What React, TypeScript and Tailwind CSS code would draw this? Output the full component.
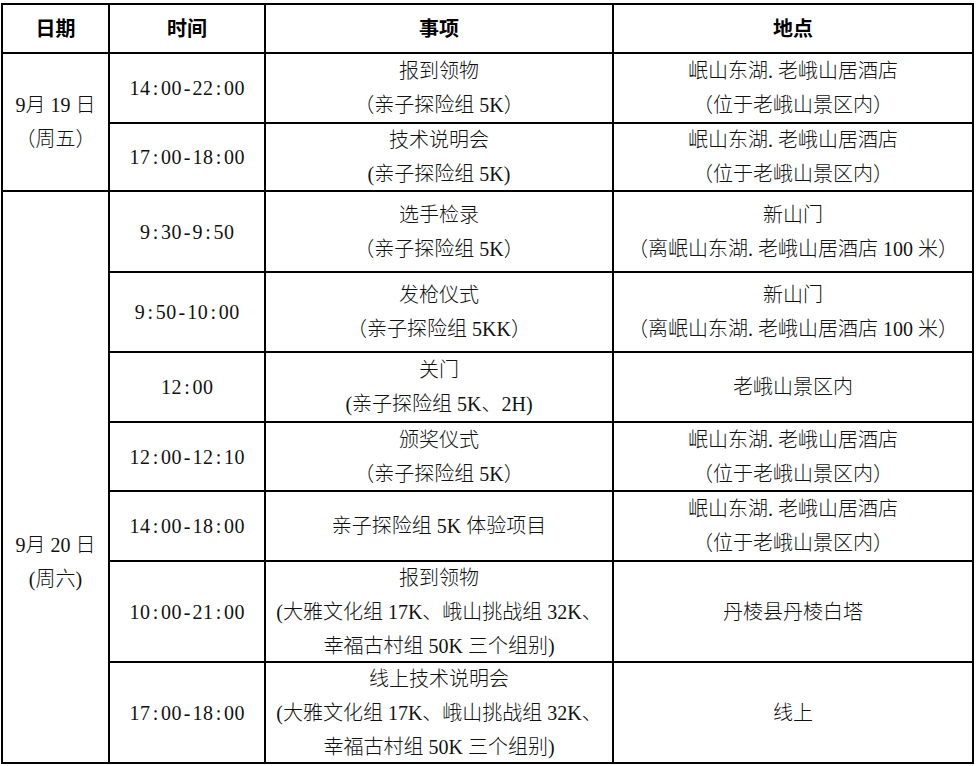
import React from "react";

type Row = { time: string; item: string[]; loc: string[] };

const LOC_A = ["岷山东湖. 老峨山居酒店", "（位于老峨山景区内）"];
const LOC_B = ["新山门", "（离岷山东湖. 老峨山居酒店 100 米）"];
const GROUPS = ["(大雅文化组 17K、峨山挑战组 32K、", "幸福古村组 50K 三个组别)"];

const day1: Row[] = [
  { time: "14:00-22:00", item: ["报到领物", "（亲子探险组 5K）"], loc: LOC_A },
  { time: "17:00-18:00", item: ["技术说明会", "(亲子探险组 5K)"], loc: LOC_A },
];

const day2: Row[] = [
  { time: "9:30-9:50", item: ["选手检录", "（亲子探险组 5K）"], loc: LOC_B },
  { time: "9:50-10:00", item: ["发枪仪式", "（亲子探险组 5KK）"], loc: LOC_B },
  { time: "12:00", item: ["关门", "(亲子探险组 5K、2H)"], loc: ["老峨山景区内"] },
  { time: "12:00-12:10", item: ["颁奖仪式", "（亲子探险组 5K）"], loc: LOC_A },
  { time: "14:00-18:00", item: ["亲子探险组 5K 体验项目"], loc: LOC_A },
  { time: "10:00-21:00", item: ["报到领物", ...GROUPS], loc: ["丹棱县丹棱白塔"] },
  { time: "17:00-18:00", item: ["线上技术说明会", ...GROUPS], loc: ["线上"] },
];

const cell =
  "flex flex-col items-center justify-center text-center border-r-2 border-b-2 border-black leading-[34px] whitespace-nowrap";

function Time({ t }: { t: string }) {
  return (
    <div className={cell}>
      <div className="flex">
        {t.split("").map((c, i) => (
          <span key={i} className="inline-block w-[10.5px] text-center">
            {c}
          </span>
        ))}
      </div>
    </div>
  );
}

function Lines({ lines }: { lines: string[] }) {
  return (
    <div className={cell}>
      {lines.map((l, i) => (
        <div key={i}>{l}</div>
      ))}
    </div>
  );
}

function RowCells({ r }: { r: Row }) {
  return (
    <>
      <Time t={r.time} />
      <Lines lines={r.item} />
      <Lines lines={r.loc} />
    </>
  );
}

export default function App() {
  return (
    <div className="w-[978px] h-[766px] bg-white pt-[3px] pl-[1px] text-[#111] font-light font-['Liberation_Serif','Noto_Sans_CJK_SC',serif] text-[20px]">
      <div className="grid w-[973px] border-l-2 border-t-2 border-black grid-cols-[107px_156px_348px_360px] grid-rows-[49px_70px_68px_81px_80px_70px_69px_70px_101px_101px]">
        <div className={cell + " font-bold text-black"}>日期</div>
        <div className={cell + " font-bold text-black"}>时间</div>
        <div className={cell + " font-bold text-black"}>事项</div>
        <div className={cell + " font-bold text-black"}>地点</div>

        <div className={cell + " row-span-2"}>
          <div>9月 19 日</div>
          <div>（周五）</div>
        </div>
        {day1.map((r, i) => (
          <RowCells key={"a" + i} r={r} />
        ))}

        <div className="row-span-7 flex flex-col items-center justify-start text-center border-r-2 border-b-2 border-black leading-[34px] pt-[336px] whitespace-nowrap">
          <div>9月 20 日</div>
          <div>(周六)</div>
        </div>
        {day2.map((r, i) => (
          <RowCells key={"b" + i} r={r} />
        ))}
      </div>
    </div>
  );
}
